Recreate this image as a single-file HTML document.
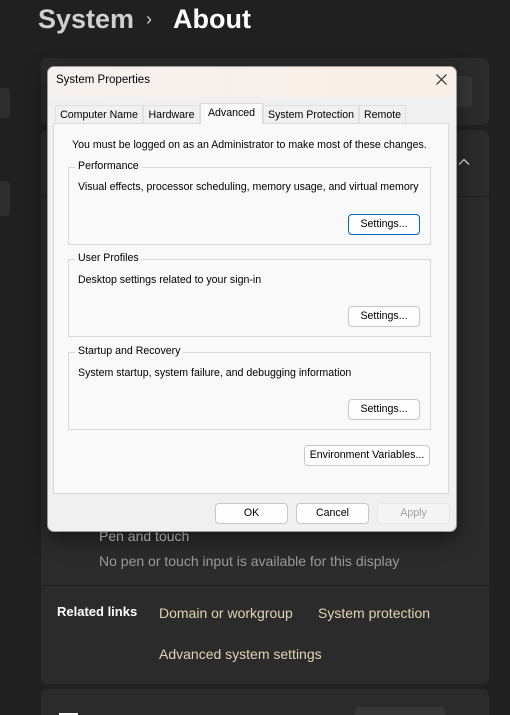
<!DOCTYPE html>
<html style="width:510px;height:715px;overflow:hidden"><head><style>
*{margin:0;padding:0;box-sizing:border-box}
body{width:510px;height:715px;background:#202020;position:relative;overflow:hidden;font-family:"Liberation Sans",sans-serif}
.a{position:absolute}
.card{position:absolute;background:#2b2b2b;border-radius:6px}
.dt{font-size:10.6px;color:#000;position:absolute;white-space:nowrap}
.gb{position:absolute;border:1px solid #d8d8d8}
.gl{position:absolute;top:-8px;left:6px;background:#f9f9f9;padding:0 3px;font-size:10.6px;color:#000}
.btn{position:absolute;background:#fdfdfd;border:1px solid #c8c8c8;border-radius:4px;font-size:10.6px;color:#000;text-align:center;line-height:19px}
.tab{position:absolute;top:105px;height:19px;font-size:10.6px;line-height:18px;text-align:center;background:#f0f0f0;border:1px solid #e0e0e0;border-bottom:none;color:#000}
</style></head><body>
<div class="a" style="left:38px;top:4px;font-size:27px;font-weight:bold;color:#cfcfcf">System</div>
<div class="a" style="left:146px;top:9px;font-size:18px;color:#cfcfcf">›</div>
<div class="a" style="left:173px;top:4px;font-size:27px;font-weight:bold;color:#fff">About</div>
<div class="a" style="left:-6px;top:88px;width:16px;height:30px;background:#2d2d2d;border-radius:4px"></div>
<div class="a" style="left:-6px;top:181px;width:16px;height:35px;background:#2d2d2d;border-radius:4px"></div>
<div class="card" style="left:41px;top:58px;width:448px;height:67px"></div>
<div class="a" style="left:410px;top:76px;width:62px;height:31px;background:#373737;border-radius:4px"></div>
<div class="card" style="left:41px;top:130px;width:448px;height:554px"></div>
<div class="a" style="left:41px;top:196px;width:448px;height:1px;background:#1e1e1e"></div>
<div class="a" style="left:41px;top:585px;width:448px;height:1px;background:#1e1e1e"></div>
<svg class="a" style="left:458px;top:158px" width="12" height="8" viewBox="0 0 12 8"><path d="M1 6.5L6 1.5L11 6.5" stroke="#ddd" stroke-width="1.3" fill="none"/></svg>
<div class="a" style="left:99px;top:528px;font-size:14px;color:#cfcfcf">Pen and touch</div>
<div class="a" style="left:99px;top:553px;font-size:14px;color:#9a9a9a">No pen or touch input is available for this display</div>
<div class="a" style="left:57px;top:604px;font-size:13px;font-weight:bold;color:#fff">Related links</div>
<div class="a" style="left:159px;top:605px;font-size:14px;color:#e3d3b3">Domain or workgroup</div>
<div class="a" style="left:318px;top:605px;font-size:14px;color:#e3d3b3">System protection</div>
<div class="a" style="left:159px;top:646px;font-size:14px;color:#e3d3b3">Advanced system settings</div>
<div class="card" style="left:41px;top:689px;width:448px;height:26px;border-radius:6px 6px 0 0"></div>
<div class="a" style="left:355px;top:707px;width:90px;height:8px;background:#373737;border-radius:4px 4px 0 0"></div>
<div class="a" style="left:59px;top:713px;width:19px;height:2px;background:#fff"></div>

<div class="a" style="left:47px;top:66px;width:410px;height:466px;background:#f0f0f0;border-radius:7px;border:1px solid #9a9a9a;box-shadow:0 6px 20px rgba(0,0,0,.5);overflow:hidden">
<div class="a" style="left:0;top:0;width:410px;height:30px;background:linear-gradient(90deg,#f6f1ee,#f9efe6)"></div>
</div>
<div class="dt" style="left:56px;top:74px;font-size:11.5px">System Properties</div>
<svg class="a" style="left:436px;top:74px" width="11" height="11" viewBox="0 0 11 11"><path d="M0.5 0.5L10.5 10.5M10.5 0.5L0.5 10.5" stroke="#222" stroke-width="1.1"/></svg>
<div class="tab" style="left:55px;width:88px">Computer Name</div>
<div class="tab" style="left:143px;width:57px">Hardware</div>
<div class="tab" style="left:263px;width:96px">System Protection</div>
<div class="tab" style="left:359px;width:47px">Remote</div>
<div class="a" style="left:53px;top:123px;width:396px;height:371px;background:#f9f9f9;border:1px solid #d9d9d9"></div>
<div class="tab" style="left:200px;top:103px;width:63px;height:21px;background:#f9f9f9;border-color:#d9d9d9">Advanced</div>
<div class="dt" style="left:72px;top:139px">You must be logged on as an Administrator to make most of these changes.</div>
<div class="gb" style="left:68px;top:167px;width:363px;height:78px"><div class="gl">Performance</div></div>
<div class="dt" style="left:78px;top:181px">Visual effects, processor scheduling, memory usage, and virtual memory</div>
<div class="btn" style="left:348px;top:214px;width:72px;height:21px;border:1px solid #0067c0">Settings...</div>
<div class="gb" style="left:68px;top:259px;width:363px;height:78px"><div class="gl">User Profiles</div></div>
<div class="dt" style="left:78px;top:274px">Desktop settings related to your sign-in</div>
<div class="btn" style="left:348px;top:306px;width:72px;height:21px">Settings...</div>
<div class="gb" style="left:68px;top:352px;width:363px;height:78px"><div class="gl">Startup and Recovery</div></div>
<div class="dt" style="left:78px;top:367px">System startup, system failure, and debugging information</div>
<div class="btn" style="left:348px;top:399px;width:72px;height:21px">Settings...</div>
<div class="btn" style="left:304px;top:445px;width:126px;height:21px">Environment Variables...</div>
<div class="btn" style="left:215px;top:503px;width:73px;height:21px">OK</div>
<div class="btn" style="left:296px;top:503px;width:73px;height:21px">Cancel</div>
<div class="btn" style="left:377px;top:503px;width:73px;height:21px;color:#a0a0a0;border-color:#e5e5e5;background:#f5f5f5">Apply</div>
</body></html>
